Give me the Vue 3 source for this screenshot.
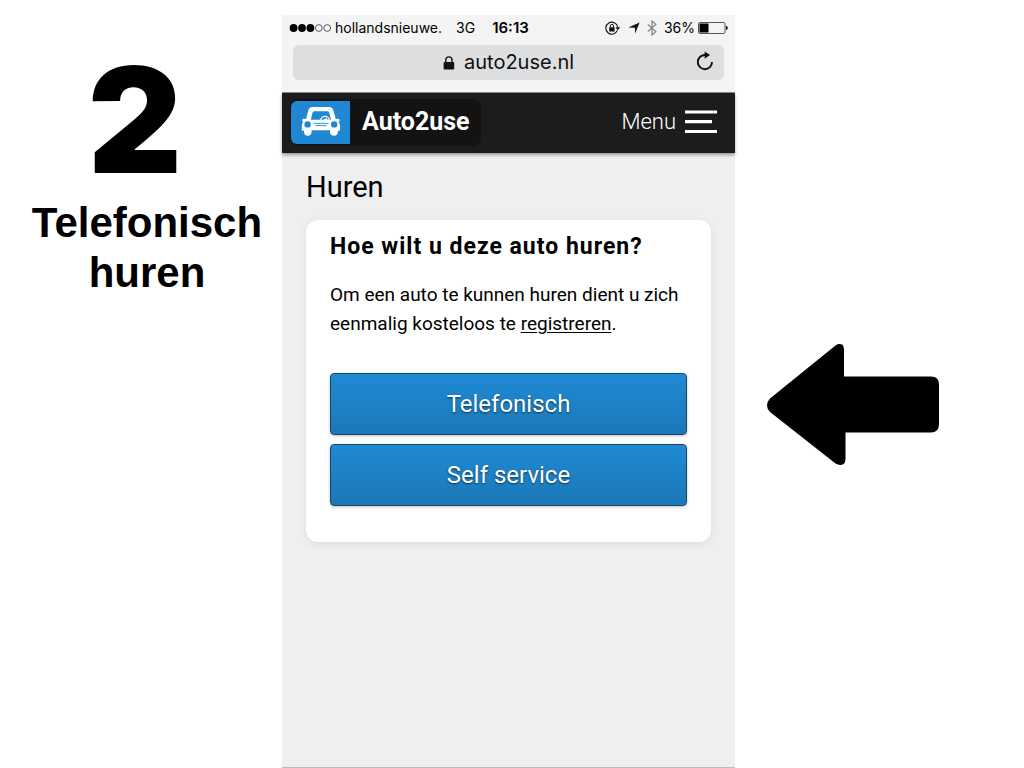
<script setup>
import { ref } from 'vue'

const address = ref('auto2use.nl')
const signal = [true, true, true, false, false]
const options = ['Telefonisch', 'Self service']
</script>

<template>
  <main class="slide">
    <section class="step">
      <div class="number">2</div>
      <h1 class="step-title">Telefonisch huren</h1>
    </section>

    <section class="phone">
      <div class="browser">
        <div class="status">
          <svg class="signal" width="42" height="10" viewBox="0 0 42 10" aria-hidden="true">
            <circle
              v-for="(on, i) in signal"
              :key="i"
              :cx="4.6 + i * 8.4"
              cy="5"
              :r="on ? 3.9 : 3.4"
              :fill="on ? '#000' : 'none'"
              :stroke="on ? 'none' : '#333'"
              stroke-width="0.8"
            />
          </svg>
          <span class="carrier">hollandsnieuwe.</span>
          <span class="network">3G</span>
          <b class="time">16:13</b>
          <span class="status-right">
            <svg width="16" height="14" viewBox="0 0 16 14" aria-hidden="true">
              <path d="M12.4 9.4A6 6 0 1 1 12.7 6" fill="none" stroke="#111" stroke-width="1.1" />
              <path d="M10.4 6.2h4.8l-2.4 3z" fill="#111" />
              <rect x="4.2" y="6.2" width="5.4" height="4.2" rx="0.5" fill="#111" />
              <path d="M5.3 6.4V5a1.6 1.6 0 0 1 3.2 0v1.4" fill="none" stroke="#111" stroke-width="1" />
            </svg>
            <svg width="12" height="12" viewBox="0 0 12 12" aria-hidden="true">
              <path d="M11.6.4 7 11.8V5.8L.4 5.4z" fill="#111" />
            </svg>
            <svg width="10" height="16" viewBox="0 0 10 16" aria-hidden="true">
              <path d="M.8 4.4l8 7.2L5 15V1l3.8 3.4-8 7.2" fill="none" stroke="#8b8b8b" stroke-width="1.3" />
            </svg>
            <span class="percent">36%</span>
            <svg class="battery" width="30" height="12" viewBox="0 0 30 12" aria-hidden="true">
              <rect x="0.5" y="0.5" width="26.5" height="11" rx="1.5" fill="none" stroke="#555" />
              <rect x="1.5" y="1.5" width="9" height="9" fill="#000" />
              <path d="M28 3.8q1.8.6 1.8 2.2T28 8.2z" fill="#111" />
            </svg>
          </span>
        </div>

        <div class="address">
          <svg width="12" height="14" viewBox="0 0 12 14" aria-hidden="true">
            <rect x="0.6" y="6" width="10.6" height="7.6" rx="1" fill="#111" />
            <path d="M2.8 6.4V4a3.1 3.1 0 0 1 6.2 0v2.4" fill="none" stroke="#111" stroke-width="1.4" />
          </svg>
          <input v-model="address" class="url" type="text" aria-label="Adres" />
          <button class="reload" type="button" aria-label="Vernieuwen">
            <svg width="18" height="20" viewBox="0 0 18 20" aria-hidden="true">
              <path d="M9.4 4A7.1 7.1 0 1 0 16 11" fill="none" stroke="#111" stroke-width="1.9" />
              <path d="M8.6.4 14 4 8.6 7.8z" fill="#111" />
            </svg>
          </button>
        </div>
      </div>

      <header class="site-header">
        <a class="logo" href="#">
          <span class="logo-mark">
            <svg width="40" height="30" viewBox="0 0 40 30" aria-hidden="true">
              <path
                fill="#fff"
                fill-rule="evenodd"
                d="M11.5 0H28Q31.3 0 32.2 3L34.8 12 37.5 11.8Q39.3 12.4 38.4 14.2L37.6 15Q39 16.6 39 19V23.4L36.8 24V25Q36.6 28.8 33 28.8 29.2 28.8 29 25V23.2H10.6V25Q10.4 28.8 6.8 28.8 3.2 28.8 3 25V24L.8 23.4V19Q.8 16.6 2.2 15L1.4 14.2Q.5 12.4 2.3 11.8L5 12 7.4 3Q8.4 0 11.5 0ZM13.4 4.2Q12 4.2 11.6 5.6L9.8 12.8H30L28.2 5.6Q27.8 4.2 26.4 4.2Z"
              />
              <circle cx="6.6" cy="17.4" r="3.2" fill="#2088d2" />
              <circle cx="33.2" cy="17.4" r="3.2" fill="#2088d2" />
              <path d="M12.5 16.4h15M14.5 18.6h11" stroke="#2088d2" stroke-width="0.9" />
              <path d="M19.8 13a4.2 3.6 0 0 1 8.4 0" fill="none" stroke="#fff" stroke-width="1.3" />
              <path d="M22 12.9l3.5-2 1.4 2z" fill="#fff" />
            </svg>
          </span>
          <span class="logo-name">Auto2use</span>
        </a>
        <button class="menu" type="button">
          <span>Menu</span>
          <svg width="32" height="24" viewBox="0 0 32 24" aria-hidden="true">
            <path d="M0 2h32M0 11.7h27M0 21.5h32" stroke="#fff" stroke-width="3.2" />
          </svg>
        </button>
      </header>

      <div class="content">
        <h2 class="page-title">Huren</h2>
        <div class="card">
          <h3 class="question">Hoe wilt u deze auto huren?</h3>
          <p class="text">
            Om een auto te kunnen huren dient u zich eenmalig kosteloos te <a href="#">registreren</a>.
          </p>
          <button v-for="option in options" :key="option" class="option" type="button">{{ option }}</button>
        </div>
      </div>
    </section>

    <section class="pointer">
      <svg width="173" height="123" viewBox="0 0 173 123" aria-hidden="true">
        <path
          d="M4 55.5 69.5 2.5Q73 0 76.5 1.8 78 3 78 7V33.5H165Q173 33.5 173 41.5V81Q173 89.5 165 89.5H79.5V115Q79.5 120 77.5 121 74 123 69.5 120.5L4 69Q1 66 1 62.5 1 58.5 4 55.5Z"
          fill="#000"
        />
      </svg>
    </section>
  </main>
</template>

<style>
body {
  margin: 0;
  background: #fff;
}
</style>

<style scoped>
.slide {
  display: grid;
  grid-template-columns: 282fr 453fr 289fr;
  box-sizing: border-box;
  min-height: 100vh;
  padding-top: 15px;
  color: #000;
  background: #fff;
}
h1,
h2,
h3,
p {
  margin: 0;
}
button {
  font: inherit;
  cursor: pointer;
}
svg {
  display: block;
  flex: none;
}
.step {
  padding: 30px 16px 0 28px;
  text-align: center;
  font-family: "Liberation Sans", Arial, sans-serif;
}
.number {
  padding-right: 24px;
  margin-bottom: 3px;
  font: 900 146px/150px Inter, "Liberation Sans", sans-serif;
}
.step-title {
  font-size: 42px;
  line-height: 50px;
  font-weight: 700;
}
.phone {
  display: flex;
  flex-direction: column;
  box-sizing: border-box;
  background: #efefef;
  border-bottom: 1px solid #bbb;
  font-family: Roboto, sans-serif;
}
.browser {
  padding: 4px 11px 12px 7px;
  background: #f4f4f4;
  border-bottom: 1px solid #888;
  font-family: Inter, "Liberation Sans", sans-serif;
}
.status {
  display: flex;
  align-items: center;
  height: 18px;
  margin-bottom: 8px;
  margin-right: -4px;
  font-size: 14px;
  line-height: 18px;
}
.carrier {
  margin-left: 4px;
}
.network {
  margin-left: 14px;
}
.time {
  margin-left: 17px;
  font-size: 15px;
  font-weight: 600;
}
.status-right {
  display: flex;
  align-items: center;
  gap: 7px;
  margin-left: auto;
}
.battery {
  margin-left: -4px;
}
.address {
  display: flex;
  position: relative;
  align-items: center;
  justify-content: center;
  gap: 9px;
  height: 35px;
  margin-left: 4px;
  border-radius: 6px;
  background: #dddee0;
}
.url {
  width: 112px;
  margin-right: -2px;
  padding: 0 0 2px;
  border: 0;
  background: none;
  color: #111;
  font: 20px/24px Inter, "Liberation Sans", sans-serif;
}
.reload {
  position: absolute;
  right: 10px;
  top: 6px;
  padding: 0;
  border: 0;
  background: none;
}
.site-header {
  display: flex;
  align-items: center;
  justify-content: space-between;
  box-sizing: border-box;
  height: 60px;
  padding: 0 18px 2px 8px;
  background: #1c1c1c;
  box-shadow: 0 2px 3px rgba(0, 0, 0, 0.35);
}
.logo {
  display: flex;
  align-items: center;
  padding: 2px 11px 2px 1px;
  border-radius: 8px;
  background: #131313;
  color: #fff;
  text-decoration: none;
}
.logo-mark {
  display: flex;
  align-items: center;
  justify-content: center;
  width: 59px;
  height: 43px;
  border-radius: 6px 0 0 6px;
  background: #2088d2;
}
.logo-name {
  margin-left: 12px;
  font: 700 25px/40px Roboto, sans-serif;
}
.menu {
  display: flex;
  align-items: center;
  gap: 9px;
  padding: 0;
  border: 0;
  background: none;
  color: #fff;
  font-size: 22px;
  font-weight: 300;
  line-height: 28px;
}
.content {
  padding: 16px 24px 24px;
}
.page-title {
  font-size: 29px;
  line-height: 36px;
  font-weight: 400;
}
.card {
  display: flex;
  flex-direction: column;
  margin-top: 15px;
  padding: 13px 24px 36px;
  border-radius: 12px;
  background: #fff;
  box-shadow: 0 2px 8px rgba(0, 0, 0, 0.08);
}
.question {
  font-size: 23px;
  line-height: 28px;
  font-weight: 700;
  letter-spacing: 1px;
}
.text {
  margin: 19px 0 35px;
  font-size: 19px;
  line-height: 29px;
}
.text a {
  color: inherit;
  text-underline-offset: 2px;
}
.option {
  height: 62px;
  border: 1px solid #1b4566;
  border-radius: 4px;
  background: linear-gradient(#1f8ad4, #1c78b7);
  box-shadow: 0 1px 3px rgba(0, 0, 0, 0.25);
  color: #fff;
  font-size: 24px;
  text-shadow: 0 1px 2px rgba(0, 0, 0, 0.6);
}
.option + .option {
  margin-top: 9px;
}
.pointer {
  padding: 328px 0 0 31px;
}
</style>
